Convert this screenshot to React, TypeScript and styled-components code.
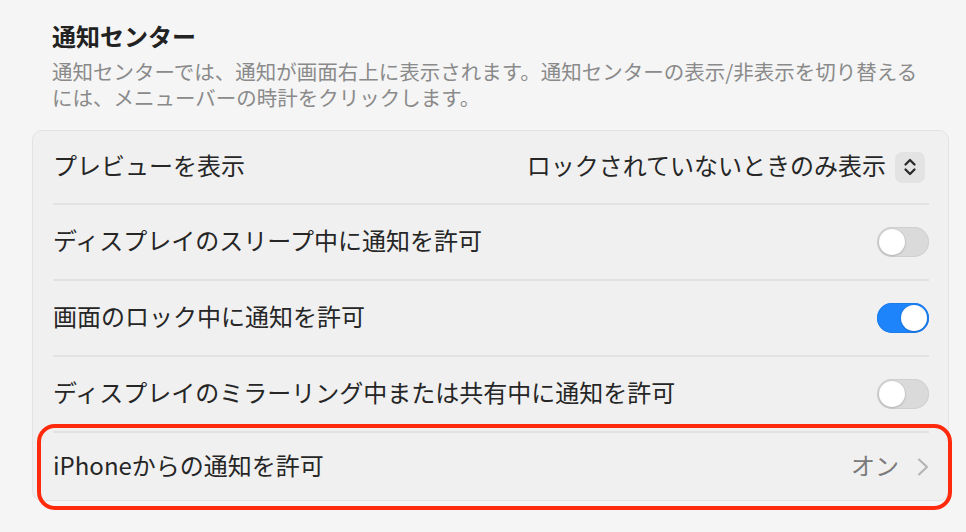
import styled, { createGlobalStyle } from "styled-components"

const GlobalStyle = createGlobalStyle`
  html, body {
    margin: 0;
    padding: 0;
    background: #f5f5f5;
  }

  body {
    font-family: "Noto Sans CJK JP", "Noto Sans", sans-serif;
    color: #262626;
  }
`

const StyledPage = styled.div`
  display: flex;
  flex-direction: column;
  width: 966px;
  height: 532px;
  box-sizing: border-box;
  padding: 21px 17px 0 32px;
  overflow: hidden;
`

const StyledHeader = styled.div`
  display: flex;
  flex-direction: column;
  padding-left: 20px;
`

const StyledTitle = styled.h2`
  margin: 0;
  font-size: 24px;
  line-height: 30px;
  font-weight: 700;
  color: #222;
`

const StyledDescription = styled.div`
  display: flex;
  flex-direction: column;
  margin-top: 7px;
`

const StyledDescriptionLine = styled.span`
  display: block;
  height: 26px;
  font-size: 20.5px;
  line-height: 26px;
  color: #8a8a8a;
  white-space: nowrap;
`

const StyledCard = styled.div`
  display: flex;
  flex-direction: column;
  margin-top: 20px;
  background: #f0f0f0;
  border: 1px solid #e3e3e3;
  border-radius: 10px;
`

const StyledRow = styled.div<{ $height: number }>`
  position: relative;
  display: flex;
  align-items: center;
  justify-content: space-between;
  height: ${(p) => p.$height}px;
  box-sizing: border-box;
  margin: 0 19px 0 20px;
  font-size: 24px;

  & + & {
    border-top: 2px solid #e2e2e2;
  }
`

const StyledLabel = styled.span`
  padding-bottom: 5px;
  color: #262626;
  white-space: nowrap;
`

const StyledValue = styled.div`
  display: flex;
  align-items: center;
  gap: 9px;
`

const StyledSelectText = styled.span`
  padding-bottom: 5px;
  color: #262626;
`

const StyledStepper = styled.div`
  display: flex;
  align-items: center;
  justify-content: center;
  width: 30px;
  height: 31px;
  margin-right: 4px;
  border-radius: 7px;
  background: #e3e3e3;
`

const StyledToggle = styled.div<{ $on: boolean }>`
  position: relative;
  width: 52px;
  height: 30px;
  border-radius: 15px;
  background: ${(p) => (p.$on ? "#1d84fb" : "#dadada")};
  box-shadow: inset 0 0 0 1px ${(p) => (p.$on ? "#1b7cec" : "#d0d0d0")};

  &::after {
    content: "";
    position: absolute;
    top: 2px;
    left: ${(p) => (p.$on ? "24px" : "2px")};
    width: 26px;
    height: 26px;
    border-radius: 50%;
    background: #fff;
    box-shadow: 0 0.5px 2px rgba(0, 0, 0, 0.3);
  }
`

const StyledLinkValue = styled.span`
  padding-bottom: 5px;
  margin-right: 9px;
  color: #7a7a7a;
`

const StyledHighlight = styled.div`
  position: absolute;
  top: -9px;
  bottom: -10px;
  left: -16px;
  right: -23px;
  border: 4px solid #ff2a0c;
  border-radius: 18px;
  pointer-events: none;
`

const Stepper = () => (
  <StyledStepper>
    <svg width="14" height="20" viewBox="0 0 14 20" fill="none">
      <path
        d="M2.5 7.5 L7 3 L11.5 7.5 M2.5 12.5 L7 17 L11.5 12.5"
        stroke="#2a2a2a"
        strokeWidth="2.3"
        strokeLinecap="round"
        strokeLinejoin="round"
      />
    </svg>
  </StyledStepper>
)

const Chevron = () => (
  <svg width="12" height="20" viewBox="0 0 12 20" fill="none">
    <path
      d="M2 2.5 L10 10 L2 17.5"
      stroke="#b3b3b3"
      strokeWidth="2"
      strokeLinecap="round"
      strokeLinejoin="round"
    />
  </svg>
)

const toggles = [
  { label: "ディスプレイのスリープ中に通知を許可", on: false },
  { label: "画面のロック中に通知を許可", on: true },
  { label: "ディスプレイのミラーリング中または共有中に通知を許可", on: false },
]

const App = () => {
  return (
    <>
      <GlobalStyle />
      <StyledPage>
        <StyledHeader>
          <StyledTitle>通知センター</StyledTitle>
          <StyledDescription>
            <StyledDescriptionLine>
              通知センターでは、通知が画面右上に表示されます。通知センターの表示/非表示を切り替える
            </StyledDescriptionLine>
            <StyledDescriptionLine>
              には、メニューバーの時計をクリックします。
            </StyledDescriptionLine>
          </StyledDescription>
        </StyledHeader>
        <StyledCard>
          <StyledRow $height={72}>
            <StyledLabel>プレビューを表示</StyledLabel>
            <StyledValue>
              <StyledSelectText>ロックされていないときのみ表示</StyledSelectText>
              <Stepper />
            </StyledValue>
          </StyledRow>
          {toggles.map((t) => (
            <StyledRow key={t.label} $height={76}>
              <StyledLabel>{t.label}</StyledLabel>
              <StyledToggle $on={t.on} />
            </StyledRow>
          ))}
          <StyledRow $height={69}>
            <StyledLabel>iPhoneからの通知を許可</StyledLabel>
            <StyledValue>
              <StyledLinkValue>オン</StyledLinkValue>
              <Chevron />
            </StyledValue>
            <StyledHighlight />
          </StyledRow>
        </StyledCard>
      </StyledPage>
    </>
  )
}

export default App
